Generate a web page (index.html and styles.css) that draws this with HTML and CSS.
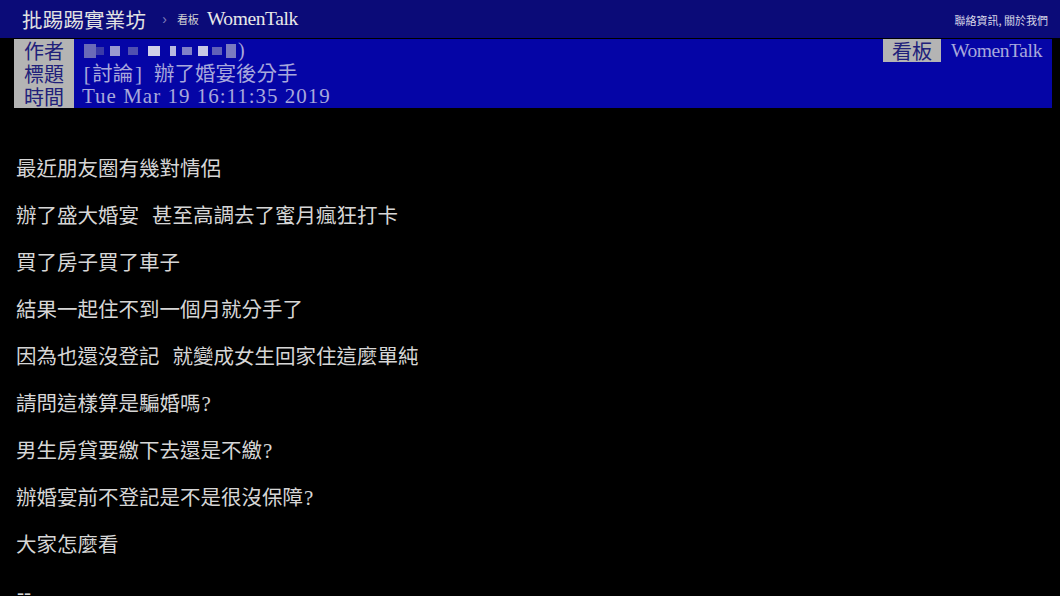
FILE: index.html
```html
<!DOCTYPE html>
<html lang="zh-Hant">
<head>
<meta charset="utf-8">
<title>WomenTalk</title>
<link rel="stylesheet" href="styles.css">
</head>
<body>
<div class="topbar">
  <div class="brand">
    <span class="site">批踢踢實業坊</span>
    <span class="sep">›</span>
    <span class="board-lbl">看板</span>
    <span class="board">WomenTalk</span>
  </div>
  <div class="links">聯絡資訊, 關於我們</div>
</div>
<div class="meta">
  <div class="row">
    <span class="tag">作者</span>
    <span class="val author">
      <span class="mz m1"></span><span class="mz m2"></span><span class="mz m3"></span><span class="mz m4"></span><span class="mz m5"></span><span class="mz m6"></span><span class="mz m7"></span><span class="mz m8"></span><span class="mz m9"></span><span class="mz m10"></span><span class="paren">)</span>
    </span>
    <span class="spacer"></span>
    <span class="tag tag-board">看板</span>
    <span class="val board-val">WomenTalk</span>
  </div>
  <div class="row">
    <span class="tag">標題</span>
    <span class="val"><span class="half">[</span>討論<span class="half">]</span><span class="half"> </span>辦了婚宴後分手</span>
  </div>
  <div class="row">
    <span class="tag">時間</span>
    <span class="val serif">Tue Mar 19 16:11:35 2019</span>
  </div>
</div>
<div class="content">
  <p>最近朋友圈有幾對情侶</p>
  <p>辦了盛大婚宴<span class="sp"></span>甚至高調去了蜜月瘋狂打卡</p>
  <p>買了房子買了車子</p>
  <p>結果一起住不到一個月就分手了</p>
  <p>因為也還沒登記<span class="sp"></span>就變成女生回家住這麼單純</p>
  <p>請問這樣算是騙婚嗎<span class="q">?</span></p>
  <p>男生房貸要繳下去還是不繳<span class="q">?</span></p>
  <p>辦婚宴前不登記是不是很沒保障<span class="q">?</span></p>
  <p>大家怎麼看</p>
  <p><span class="q">--</span></p>
</div>
</body>
</html>
```
FILE: styles.css
```css
html, body {
  margin: 0;
  padding: 0;
  background: #000;
  height: 596px;
  overflow: hidden;
}
body {
  font-family: "Noto Sans CJK TC", "Noto Sans CJK SC", sans-serif;
  color: #d6d6d6;
}
.topbar {
  height: 38px;
  background: #0b0b78;
  display: flex;
  align-items: center;
  justify-content: space-between;
  padding: 0 12px 0 22px;
}
.brand {
  display: flex;
  align-items: center;
}
.site {
  font-size: 20.5px;
  color: #e2e2e2;
  letter-spacing: 0.2px;
}
.sep {
  font-family: "Liberation Sans", sans-serif;
  font-size: 14px;
  color: #8080b8;
  margin-left: 16px;
}
.board-lbl {
  font-size: 11px;
  color: #d0d0d0;
  margin-left: 10px;
}
.board {
  font-family: "Liberation Serif", serif;
  font-size: 19.5px;
  letter-spacing: -0.4px;
  color: #e8e8e8;
  margin-left: 8px;
}
.links {
  font-size: 11px;
  color: #d8d8e8;
  margin-top: 2px;
}
.meta {
  margin: 1px 8px 0 14px;
  background: #0505a6;
  display: flex;
  flex-direction: column;
}
.row {
  height: 23px;
  display: flex;
  align-items: center;
}
.tag {
  width: 60px;
  height: 23px;
  background: #b4b4b4;
  color: #20207a;
  font-size: 20px;
  line-height: 23px;
  text-align: center;
  flex: none;
}
.val {
  font-size: 20.5px;
  line-height: 23px;
  color: #a8a8dc;
  margin-left: 8px;
  white-space: pre;
}
.half {
  font-family: "Liberation Serif", serif;
  font-size: 21px;
  display: inline-block;
  width: 10.3px;
  text-align: center;
}
.serif {
  font-family: "Liberation Serif", serif;
  font-size: 21px;
  letter-spacing: 1px;
}
.author {
  display: flex;
  align-items: center;
  height: 23px;
}
.mz {
  display: inline-block;
  height: 10px;
  flex: none;
}
.m1 { width: 12px; height: 14px; background: #6a6ab8; margin-left: 2px; }
.m2 { width: 8px; height: 8px; background: #3a3aa8; }
.m3 { width: 10px; height: 10px; background: #9a9ad0; margin-left: 6px; }
.m4 { width: 10px; height: 8px; background: #5050b0; margin-left: 8px; }
.m5 { width: 12px; height: 10px; background: #d0d0e8; margin-left: 10px; }
.m6 { width: 6px; height: 10px; background: #b8b8e0; margin-left: 10px; }
.m7 { width: 10px; height: 8px; background: #8080c8; margin-left: 6px; }
.m8 { width: 10px; height: 10px; background: #c8c8e4; margin-left: 6px; }
.m9 { width: 10px; height: 8px; background: #6060b8; margin-left: 4px; }
.m10 { width: 10px; height: 14px; background: #7a7ac0; margin-left: 4px; }
.paren {
  font-family: "Liberation Serif", serif;
  font-size: 20px;
  color: #a8a8dc;
  margin-left: 2px;
}
.spacer {
  flex: 1;
}
.tag-board {
  width: 58px;
}
.board-val {
  font-family: "Liberation Serif", serif;
  font-size: 19.5px;
  letter-spacing: -0.4px;
  margin-left: 10px;
  margin-right: 10px;
}
.content {
  padding: 36px 0 0 16px;
}
.content p {
  margin: 0;
  font-size: 20.5px;
  line-height: 47px;
  height: 47px;
  white-space: pre;
}
.sp {
  display: inline-block;
  width: 13px;
}
.q {
  font-family: "Liberation Serif", serif;
  font-size: 21px;
  margin-left: 1px;
}
```
